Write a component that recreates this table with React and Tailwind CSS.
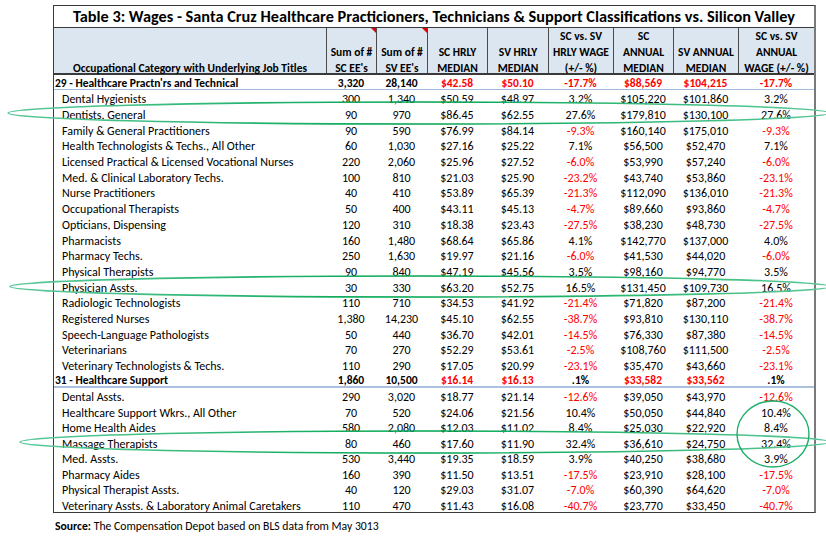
import React from "react";

const cols = "grid grid-cols-[272px_50px_51px_60px_61px_65px_60px_65px_76px]";

const sections = [
  {
    head: ["29 - Healthcare Practn'rs and Technical", "3,320", "28,140", "$42.58", "$50.10", "-17.7%", "$88,569", "$104,215", "-17.7%"],
    line: "h-[15px] border-b border-[#9fbadb]",
    rowH: "h-[15.7px]",
    rows: [
      ["Dental Hygienists", "300", "1,340", "$50.59", "$48.97", "3.2%", "$105,220", "$101,860", "3.2%"],
      ["Dentists, General", "90", "970", "$86.45", "$62.55", "27.6%", "$179,810", "$130,100", "27.6%"],
      ["Family & General Practitioners", "90", "590", "$76.99", "$84.14", "-9.3%", "$160,140", "$175,010", "-9.3%"],
      ["Health Technologists & Techs., All Other", "60", "1,030", "$27.16", "$25.22", "7.1%", "$56,500", "$52,470", "7.1%"],
      ["Licensed Practical & Licensed Vocational Nurses", "220", "2,060", "$25.96", "$27.52", "-6.0%", "$53,990", "$57,240", "-6.0%"],
      ["Med. & Clinical Laboratory Techs.", "100", "810", "$21.03", "$25.90", "-23.2%", "$43,740", "$53,860", "-23.1%"],
      ["Nurse Practitioners", "40", "410", "$53.89", "$65.39", "-21.3%", "$112,090", "$136,010", "-21.3%"],
      ["Occupational Therapists", "50", "400", "$43.11", "$45.13", "-4.7%", "$89,660", "$93,860", "-4.7%"],
      ["Opticians, Dispensing", "120", "310", "$18.38", "$23.43", "-27.5%", "$38,230", "$48,730", "-27.5%"],
      ["Pharmacists", "160", "1,480", "$68.64", "$65.86", "4.1%", "$142,770", "$137,000", "4.0%"],
      ["Pharmacy Techs.", "250", "1,630", "$19.97", "$21.16", "-6.0%", "$41,530", "$44,020", "-6.0%"],
      ["Physical Therapists", "90", "840", "$47.19", "$45.56", "3.5%", "$98,160", "$94,770", "3.5%"],
      ["Physician Assts.", "30", "330", "$63.20", "$52.75", "16.5%", "$131,450", "$109,730", "16.5%"],
      ["Radiologic Technologists", "110", "710", "$34.53", "$41.92", "-21.4%", "$71,820", "$87,200", "-21.4%"],
      ["Registered Nurses", "1,380", "14,230", "$45.10", "$62.55", "-38.7%", "$93,810", "$130,110", "-38.7%"],
      ["Speech-Language Pathologists", "50", "440", "$36.70", "$42.01", "-14.5%", "$76,330", "$87,380", "-14.5%"],
      ["Veterinarians", "70", "270", "$52.29", "$53.61", "-2.5%", "$108,760", "$111,500", "-2.5%"],
      ["Veterinary Technologists & Techs.", "110", "290", "$17.05", "$20.99", "-23.1%", "$35,470", "$43,660", "-23.1%"],
    ],
  },
  {
    head: ["31 - Healthcare Support", "1,860", "10,500", "$16.14", "$16.13", ".1%", "$33,582", "$33,562", ".1%"],
    line: "h-[15.8px] border-b-2 border-[#a9c1dd]",
    rowH: "h-[15.5px]",
    rows: [
      ["Dental Assts.", "290", "3,020", "$18.77", "$21.14", "-12.6%", "$39,050", "$43,970", "-12.6%"],
      ["Healthcare Support Wkrs., All Other", "70", "520", "$24.06", "$21.56", "10.4%", "$50,050", "$44,840", "10.4%"],
      ["Home Health Aides", "580", "2,080", "$12.03", "$11.02", "8.4%", "$25,030", "$22,920", "8.4%"],
      ["Massage Therapists", "80", "460", "$17.60", "$11.90", "32.4%", "$36,610", "$24,750", "32.4%"],
      ["Med. Assts.", "530", "3,440", "$19.35", "$18.59", "3.9%", "$40,250", "$38,680", "3.9%"],
      ["Pharmacy Aides", "160", "390", "$11.50", "$13.51", "-17.5%", "$23,910", "$28,100", "-17.5%"],
      ["Physical Therapist Assts.", "40", "120", "$29.03", "$31.07", "-7.0%", "$60,390", "$64,620", "-7.0%"],
      ["Veterinary Assts. & Laboratory Animal Caretakers", "110", "470", "$11.43", "$16.08", "-40.7%", "$23,770", "$33,450", "-40.7%"],
    ],
  },
];

const headers = [
  ["Occupational Category with Underlying Job Titles"],
  ["Sum of #", "SC EE's"],
  ["Sum of #", "SV EE's"],
  ["SC HRLY", "MEDIAN"],
  ["SV HRLY", "MEDIAN"],
  ["SC vs. SV", "HRLY WAGE", "(+/- %)"],
  ["SC", "ANNUAL", "MEDIAN"],
  ["SV ANNUAL", "MEDIAN"],
  ["SC vs. SV", "ANNUAL", "WAGE (+/- %)"],
];

function SectionRow({ cells, line }) {
  return (
    <div className={`${cols} items-center pt-[3px] font-bold text-[11.5px] ${line}`}>
      <div className="pl-[1px] whitespace-nowrap">{cells[0]}</div>
      {cells.slice(1).map((c, i) => {
        // money columns and negative % are red, counts and the ".1%" stay black
        const red = i >= 2 && (c.startsWith("$") || c.startsWith("-"));
        return (
          <div key={i} className={`text-center ${red ? "text-[#ff0000]" : ""}`}>
            {c}
          </div>
        );
      })}
    </div>
  );
}

function DataRow({ cells, h }) {
  return (
    <div className={`${cols} ${h} items-center pt-[3px]`}>
      <div className="pl-[8px] whitespace-nowrap">{cells[0]}</div>
      {cells.slice(1).map((c, i) => (
        <div key={i} className={`text-center ${c.startsWith("-") ? "text-[#ff0000]" : ""}`}>
          {c}
        </div>
      ))}
    </div>
  );
}

export default function App() {
  return (
    <div className="relative w-[826px] h-[540px] bg-white text-black font-['Carlito','Lato',sans-serif] text-[12px] leading-none">
      <div className="pt-[5px] pl-[53px]">
        <div className="w-[763px] border border-[#3a3a3a] border-r-2 border-r-[#7a7a7a]">
          <div className="h-[22px] flex items-center justify-center font-bold text-[16.3px] border-b border-[#3a3a3a]">
            Table 3: Wages - Santa Cruz Healthcare Practicioners, Technicians &amp; Support Classifications vs. Silicon Valley
          </div>
          <div className={`${cols} h-[47px] bg-[#dce6f1] border-b-2 border-[#3a3a3a] font-bold text-[11.5px]`}>
            {headers.map((h, i) => (
              <div
                key={i}
                className={`relative flex flex-col justify-end ${i > 0 ? "border-l border-[#4a4a4a]" : ""}`}
              >
                <div className="flex flex-col items-center leading-[16px] -mb-[3px]">
                  {h.map((t) => (
                    <span key={t} className="whitespace-nowrap">{t}</span>
                  ))}
                </div>
                {(i === 1 || i === 2) && (
                  <span className="absolute top-0 right-0 w-0 h-0 border-t-[5px] border-l-[5px] border-t-[#e00000] border-l-transparent" />
                )}
              </div>
            ))}
          </div>
          {sections.map((s) => (
            <React.Fragment key={s.head[0]}>
              <SectionRow cells={s.head} line={s.line} />
              {s.rows.map((r) => (
                <DataRow key={r[0]} cells={r} h={s.rowH} />
              ))}
            </React.Fragment>
          ))}
        </div>
        <div className="mt-[8px] pl-[2px] text-[11.7px]">
          <span className="font-bold">Source:</span> The Compensation Depot based on BLS data from May 3013
        </div>
      </div>

      <svg className="absolute inset-0 pointer-events-none" width="826" height="540" viewBox="0 0 826 540">
        <defs>
          <linearGradient id="g" x1="0" y1="0" x2="1" y2="0">
            <stop offset="0" stopColor="#5cc99a" />
            <stop offset="0.5" stopColor="#00a550" />
            <stop offset="1" stopColor="#5cc99a" />
          </linearGradient>
        </defs>
        <ellipse cx="419" cy="113" rx="411" ry="11" fill="none" stroke="url(#g)" strokeWidth="1.6" />
        <ellipse cx="420" cy="286.5" rx="410" ry="10.5" fill="none" stroke="url(#g)" strokeWidth="1.6" />
        <ellipse cx="425" cy="442" rx="405" ry="11" fill="none" stroke="url(#g)" strokeWidth="1.6" />
        <ellipse cx="773" cy="434" rx="36" ry="33" fill="none" stroke="#1fae6c" strokeWidth="1.4" />
      </svg>
    </div>
  );
}
